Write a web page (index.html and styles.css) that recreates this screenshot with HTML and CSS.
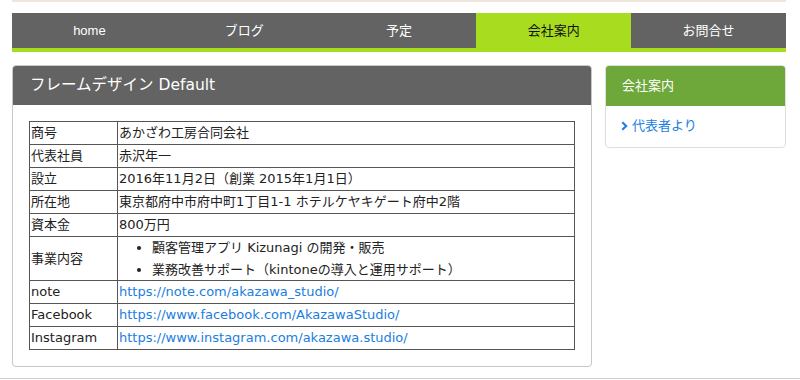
FILE: index.html
```html
<!DOCTYPE html>
<html lang="ja">
  <head>
    <meta charset="utf-8">
    <title>会社案内</title>
    <link rel="stylesheet" href="styles.css">
  </head>
  <body>
    <div id="page">
      <div class="top-strip"></div>

      <nav class="global-nav">
        <a href="#">home</a>
        <a href="#">ブログ</a>
        <a href="#">予定</a>
        <a href="#" class="current">会社案内</a>
        <a href="#">お問合せ</a>
      </nav>

      <div class="columns">
        <div class="main-panel">
          <h2 class="panel-title">フレームデザイン Default</h2>
          <div class="panel-body">
            <table class="company">
              <tr><td class="label">商号</td><td>あかざわ工房合同会社</td></tr>
              <tr><td class="label">代表社員</td><td>赤沢年一</td></tr>
              <tr><td class="label">設立</td><td>2016年11月2日（創業 2015年1月1日）</td></tr>
              <tr><td class="label">所在地</td><td>東京都府中市府中町1丁目1-1 ホテルケヤキゲート府中2階</td></tr>
              <tr><td class="label">資本金</td><td>800万円</td></tr>
              <tr>
                <td class="label">事業内容</td>
                <td>
                  <ul>
                    <li>顧客管理アプリ Kizunagi の開発・販売</li>
                    <li>業務改善サポート（kintoneの導入と運用サポート）</li>
                  </ul>
                </td>
              </tr>
              <tr><td class="label">note</td><td><a href="#">https://note.com/akazawa_studio/</a></td></tr>
              <tr><td class="label">Facebook</td><td><a href="#">https://www.facebook.com/AkazawaStudio/</a></td></tr>
              <tr><td class="label">Instagram</td><td><a href="#">https://www.instagram.com/akazawa.studio/</a></td></tr>
            </table>
          </div>
        </div>

        <aside class="side-panel">
          <h3 class="side-title">会社案内</h3>
          <ul class="side-links">
            <li>
              <a href="#">
                <svg class="chevron" width="7" height="10" viewBox="0 0 7 10"><path d="M1.3 1.2 5.2 5 1.3 8.8" fill="none" stroke="currentColor" stroke-width="2.1"/></svg>
                代表者より
              </a>
            </li>
          </ul>
        </aside>
      </div>
    </div>
    <div class="footer-line"></div>
  </body>
</html>
```
FILE: styles.css
```css
* {
  box-sizing: border-box;
}

html, body {
  margin: 0;
  padding: 0;
  font: 13px/1.5 "DejaVu Sans", "Noto Sans CJK JP", sans-serif;
  color: #222;
  background: #fff;
}

a {
  color: #1a7ee0;
  text-decoration: none;
}

#page {
  width: 774px;
  margin-left: 12px;
}

.top-strip {
  height: 2px;
  background: #efe6da;
  margin-bottom: 11px;
}

.global-nav {
  display: flex;
  background: #636363;
  border-bottom: 4px solid #a8dc1e;
}

.global-nav a {
  flex: 1;
  height: 35px;
  line-height: 35px;
  font-family: "Liberation Sans", "Noto Sans CJK JP", sans-serif;
  text-align: center;
  color: #fff;
}

.global-nav a.current {
  background: #a8dc1e;
  color: #111;
}

.columns {
  display: flex;
  align-items: flex-start;
  gap: 13px;
  margin-top: 13px;
}

.main-panel {
  width: 580px;
  border: 1px solid #c8c8c8;
  border-radius: 4px;
  overflow: hidden;
}

.panel-title {
  margin: 0;
  height: 39px;
  padding: 0 17px;
  line-height: 38px;
  font-size: 15.5px;
  font-weight: normal;
  color: #fff;
  background: #636363;
}

.panel-body {
  padding: 16px;
}

.company {
  width: 100%;
  border-collapse: collapse;
}

.company td {
  border: 1px solid #555;
  padding: 0 1px;
  line-height: 22px;
  vertical-align: middle;
}

.company td.label {
  width: 88px;
}

.company ul {
  margin: 0;
  padding-left: 33px;
}

.company li {
  line-height: 21.5px;
}

.side-panel {
  width: 181px;
  border: 1px solid #dedede;
  border-radius: 4px;
  overflow: hidden;
}

.side-title {
  margin: 0;
  height: 40px;
  padding: 0 16px;
  line-height: 39px;
  font-size: 13px;
  font-weight: normal;
  color: #fff;
  background: #6ea83a;
}

.side-links {
  list-style: none;
  margin: 0;
  padding: 10px 15px 11px;
}

.side-links a {
  display: flex;
  align-items: center;
  line-height: 20px;
}

.chevron {
  margin-right: 4px;
}

.footer-line {
  margin-top: 11px;
  border-top: 1px solid #cfcfcf;
  height: 2px;
}
```
